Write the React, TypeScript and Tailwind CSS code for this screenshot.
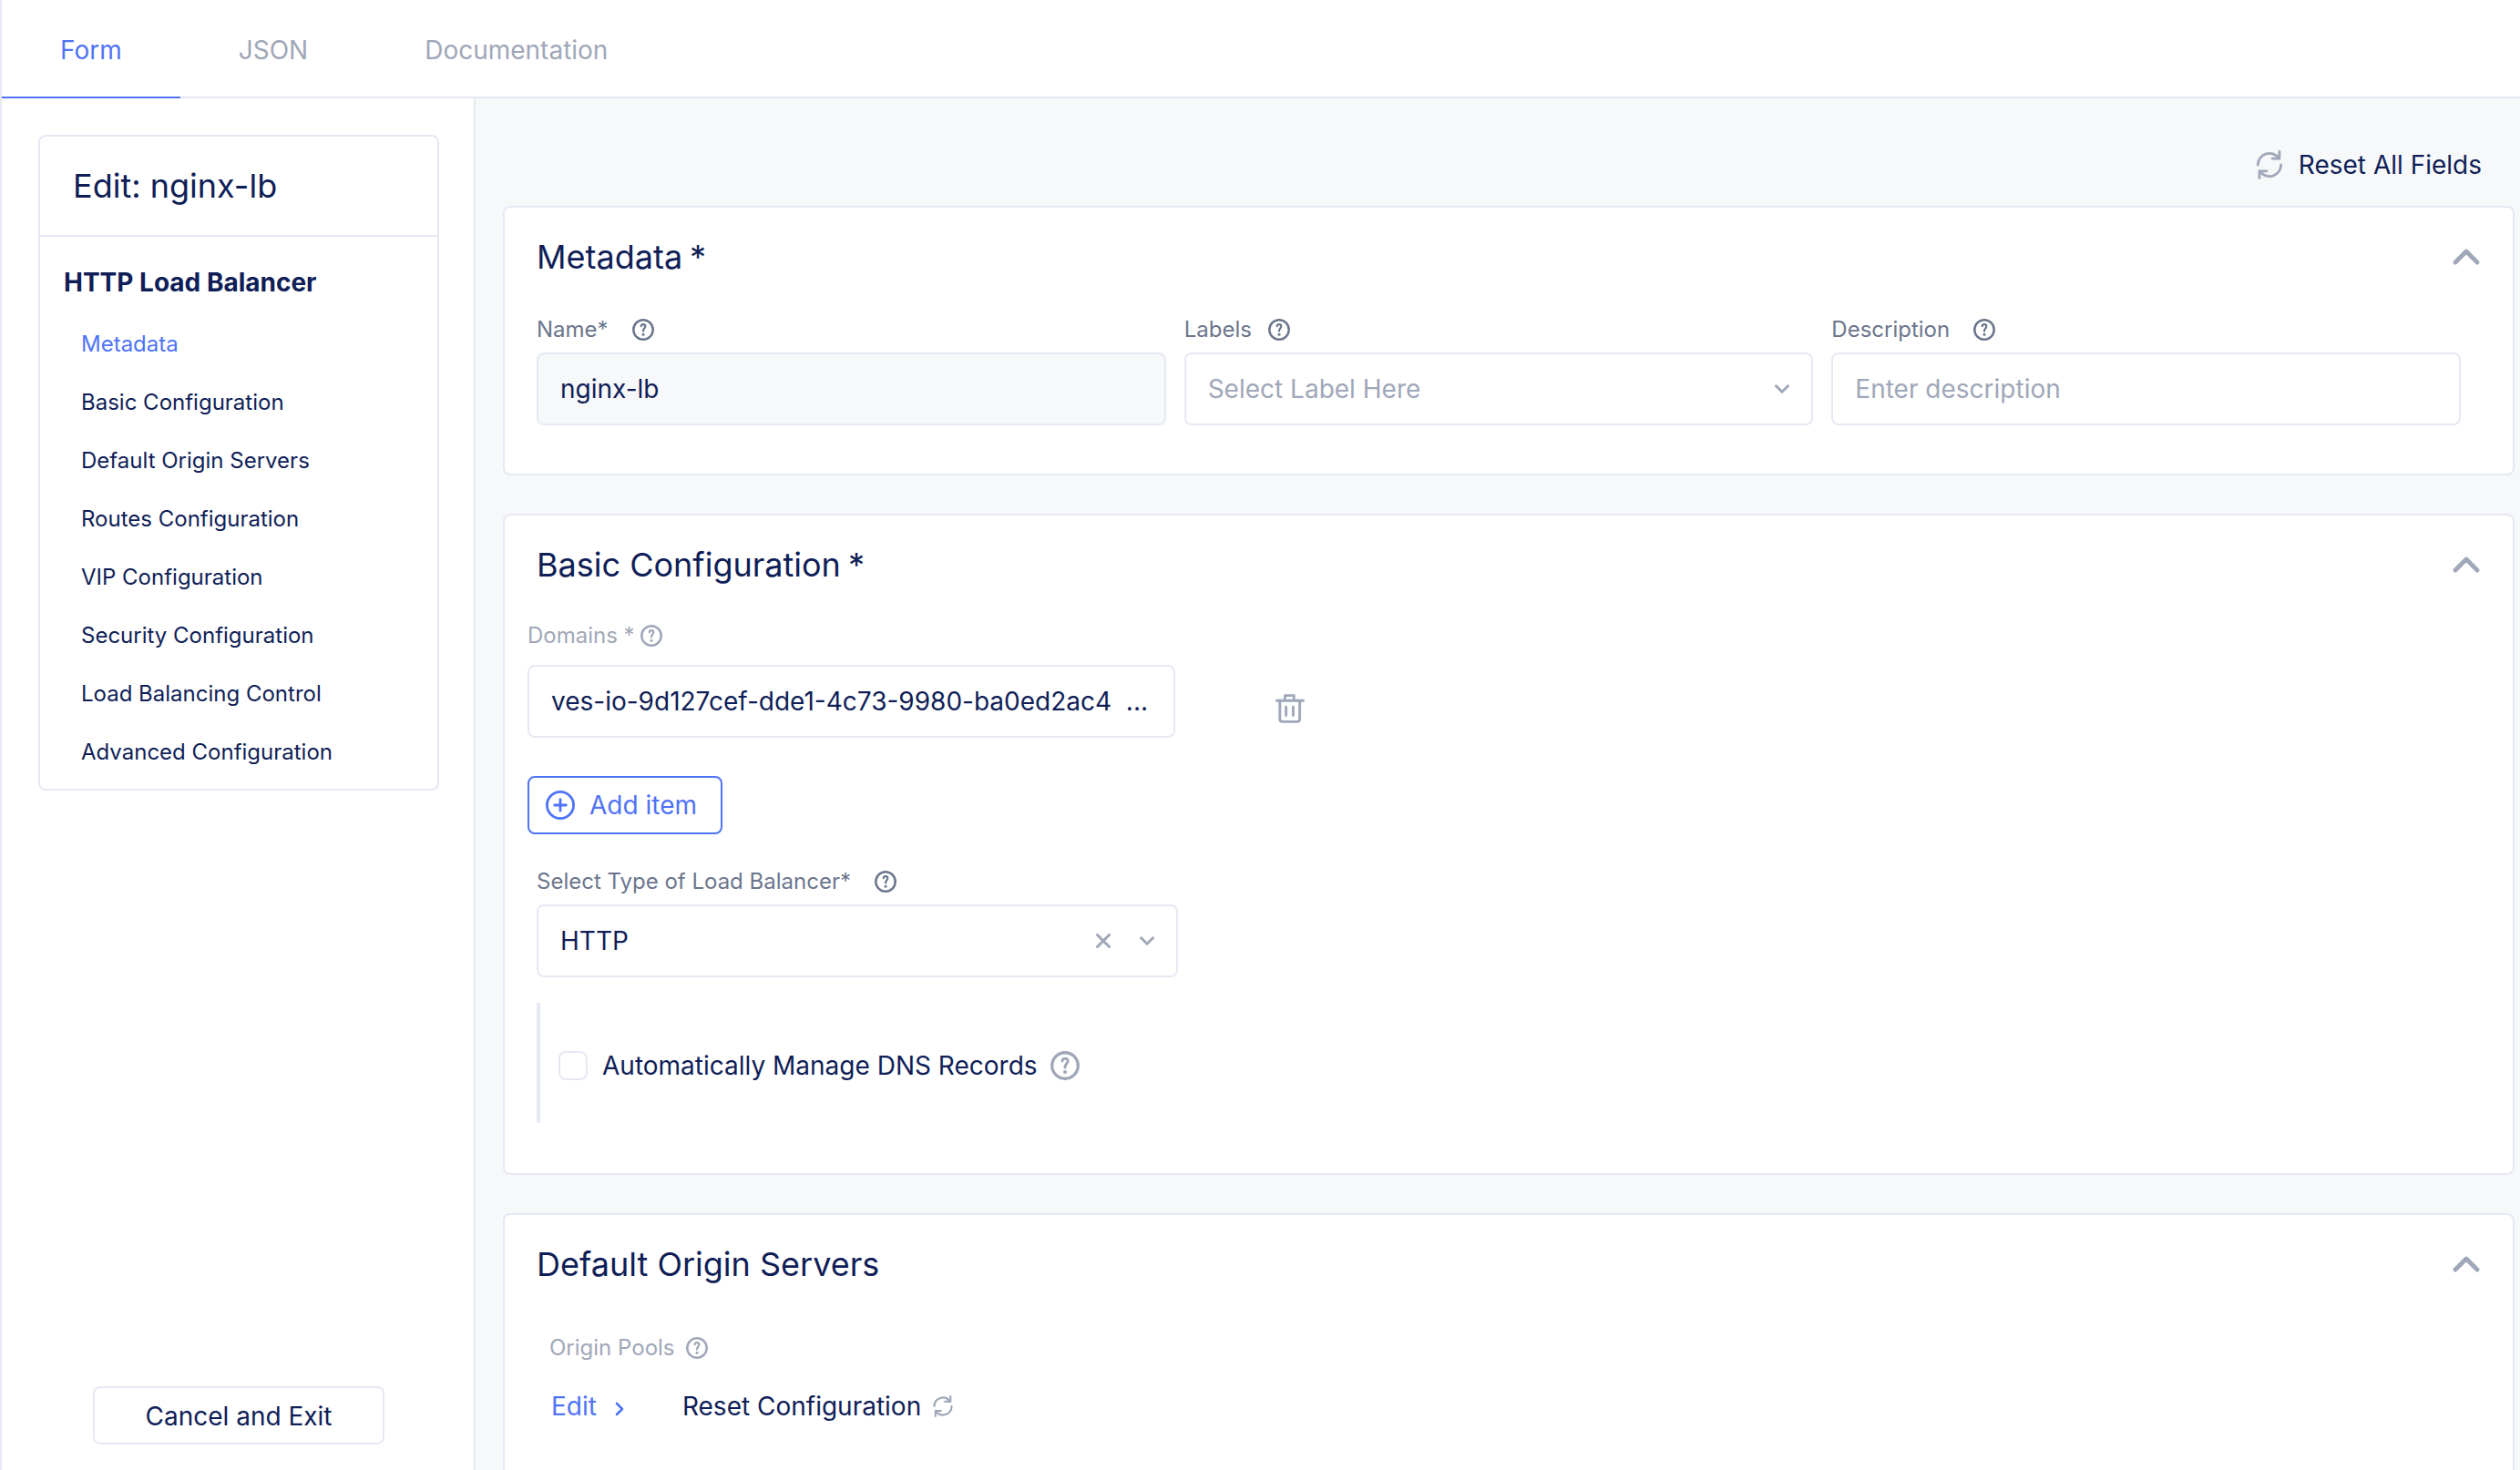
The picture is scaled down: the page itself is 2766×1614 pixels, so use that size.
import React from "react";

type IconProps = { className?: string };

function Help({ className = "" }: IconProps) {
  return (
    <svg viewBox="0 0 24 24" fill="none" stroke="currentColor" strokeLinecap="round" strokeLinejoin="round" className={"shrink-0 " + className} aria-hidden="true">
      <circle cx="12" cy="12" r="10.7" strokeWidth="2.5" />
      <path d="M9.7 8.2C9.800 6.900 10.800 6.200 12 6.200c1.300 0 2.300.8 2.300 2.100 0 1-.5 1.600-1.200 2.400-.7.8-1.100 1.500-1.100 2.900" strokeWidth="2.200" />
      <circle cx="12" cy="17.300" r="1.500" fill="currentColor" stroke="none" />
    </svg>
  );
}

function Refresh({ className = "" }: IconProps) {
  return (
    <svg viewBox="0 0 32 32" fill="none" stroke="currentColor" strokeWidth="2.800" strokeLinecap="round" strokeLinejoin="round" className={"shrink-0 " + className} aria-hidden="true">
      <path d="M3.300 16A12.700 12.700 0 0 1 26.500 8.900" />
      <path d="M27 1.400v7.800h-8" />
      <path d="M28.700 16A12.700 12.700 0 0 1 5.500 23.100" />
      <path d="M5 30.600v-7.800h8" />
    </svg>
  );
}

function ChevronUp() {
  return (
    <svg viewBox="0 0 30 18" fill="none" stroke="currentColor" strokeWidth="4.800" strokeLinecap="round" strokeLinejoin="round" className="h-[18px] w-[30px]" aria-hidden="true">
      <path d="M3 15 15 3l12 12" />
    </svg>
  );
}

function ChevronDown() {
  return (
    <svg viewBox="0 0 16 10" fill="none" stroke="currentColor" strokeWidth="3" strokeLinecap="round" strokeLinejoin="round" className="h-[10px] w-4" aria-hidden="true">
      <path d="m1.500 1.800 6.500 6.400 6.500-6.400" />
    </svg>
  );
}

function Trash() {
  return (
    <svg viewBox="0 0 32 32" fill="none" stroke="currentColor" strokeWidth="2.900" strokeLinecap="round" strokeLinejoin="round" className="size-8" aria-hidden="true">
      <path d="M1.500 7.300h29" />
      <path d="M10.400 7V1.600h9.800V7" />
      <path d="M4.800 7.300v20.200c0 1.700 1.200 2.900 2.900 2.900h16c1.700 0 2.900-1.200 2.900-2.900V7.300" />
      <path d="M11.600 14.200v9.300M19.400 14.200v9.300" />
    </svg>
  );
}

function PlusCircle() {
  return (
    <svg viewBox="0 0 32 32" fill="none" stroke="currentColor" strokeWidth="2.800" strokeLinecap="round" className="size-8" aria-hidden="true">
      <circle cx="16" cy="16" r="14.600" />
      <path d="M16 9.700v12.600M9.700 16h12.600" />
    </svg>
  );
}

const box = "h-20 w-full rounded-lg border-2 border-[#e6e9f3] bg-white px-6 text-[28px] outline-none";

function FieldLabel({ htmlFor, text, gap }: { htmlFor: string; text: string; gap: string }) {
  return (
    <div className={"flex h-[51px] items-center text-2xl text-[#6b768d] " + gap}>
      <label htmlFor={htmlFor}>{text}</label>
      <button type="button" aria-label={"Help for " + text}>
        <Help className="size-6" />
      </button>
    </div>
  );
}

function Card({ title, required, className = "", children }: { title: string; required?: boolean; className?: string; children: React.ReactNode }) {
  return (
    <section className={"rounded-lg border-2 border-[#e6e9f3] bg-white pl-[35px] " + className}>
      <header className="flex h-[108px] items-center justify-between pr-9">
        <h2 className="flex gap-2 text-4xl">
          {title}
          {required && <span>*</span>}
        </h2>
        <button type="button" aria-label={"Collapse " + title} className="text-[#9fa7b8]">
          <ChevronUp />
        </button>
      </header>
      {children}
    </section>
  );
}

const sections = [
  "Metadata",
  "Basic Configuration",
  "Default Origin Servers",
  "Routes Configuration",
  "VIP Configuration",
  "Security Configuration",
  "Load Balancing Control",
  "Advanced Configuration",
];

export default function App() {
  return (
    <div className="flex h-screen flex-col overflow-hidden border-l-2 border-[#e6e9f3] bg-white font-[Inter,sans-serif] text-[28px] text-[#0f1e57]">
      <nav className="flex h-[108px] shrink-0 border-b-2 border-[#e6e9f3] text-[#9fa7b8]">
        <button type="button" className="-mb-0.5 border-b-2 border-[#4f73f7] px-16 pt-1 text-[#4f73f7]">Form</button>
        <button type="button" className="px-16 pt-1">JSON</button>
        <button type="button" className="px-16 pt-1">Documentation</button>
      </nav>

      <div className="flex min-h-0 flex-1">
        <aside className="flex w-[520px] shrink-0 flex-col border-r-2 border-[#e6e9f3] pt-10 pr-[38px] pb-7 pl-10">
          <div className="rounded-lg border-2 border-[#e6e9f3] pb-2">
            <h1 className="flex h-[110px] items-center border-b-2 border-[#e6e9f3] px-9 text-4xl">Edit: nginx-lb</h1>
            <p className="mt-7 px-[26px] leading-[44px] font-bold">HTTP Load Balancer</p>
            <ul className="mt-3.5 text-2xl">
              {sections.map((name, i) => (
                <li key={name}>
                  <a href={"#section-" + i} className={"block pl-[45px] leading-[64px] " + (i === 0 ? "text-[#4f73f7]" : "")}>{name}</a>
                </li>
              ))}
            </ul>
          </div>
          <button type="button" className="mt-auto h-16 w-80 self-center rounded-lg border-2 border-[#e6e9f3] pt-0.5">Cancel and Exit</button>
        </aside>

        <main className="min-w-0 flex-1 overflow-hidden bg-[#f7f8fa] pr-1.5 pl-[30px]">
          <div className="flex h-[118px] items-end justify-end pr-9 pb-7">
            <button type="button" className="flex items-center gap-4 leading-[34px]">
              <Refresh className="size-8 text-[#9fa7b8]" />
              Reset All Fields
            </button>
          </div>

          <Card title="Metadata" required className="pb-[53px]">
            <div className="grid grid-cols-3 gap-5 pr-[57px]">
              <div>
                <FieldLabel htmlFor="name" text="Name*" gap="gap-[26px]" />
                <input id="name" readOnly value="nginx-lb" className="h-20 w-full rounded-lg border-2 border-[#e6e9f3] bg-[#f7f8fa] px-6 text-[28px] outline-none" />
              </div>
              <div>
                <FieldLabel htmlFor="labels" text="Labels" gap="gap-[18px]" />
                <div className="relative">
                  <select id="labels" defaultValue="" className={box + " appearance-none text-[#9fa7b8]"}>
                    <option value="">Select Label Here</option>
                  </select>
                  <span className="pointer-events-none absolute inset-y-0 right-[26px] flex items-center text-[#9fa7b8]">
                    <ChevronDown />
                  </span>
                </div>
              </div>
              <div>
                <FieldLabel htmlFor="description" text="Description" gap="gap-[26px]" />
                <input id="description" placeholder="Enter description" className={box + " placeholder:text-[#9fa7b8]"} />
              </div>
            </div>
          </Card>

          <Card title="Basic Configuration" required className="mt-[42px] pb-[55px]">
            <div className="-ml-2.5">
              <div className="flex h-12 items-center gap-1.5 text-2xl text-[#9fa7b8]">
                <label htmlFor="domain">Domains *</label>
                <button type="button" aria-label="Help for Domains">
                  <Help className="size-6" />
                </button>
              </div>
              <div className="mt-2 flex items-center">
                <div className="w-[711px]">
                  <input id="domain" readOnly value={"ves-io-9d127cef-dde1-4c73-9980-ba0ed2ac4\u00a0\u00a0..."} className={box} />
                </div>
                <button type="button" aria-label="Delete domain" className="mt-4 ml-[110px] text-[#9fa7b8]">
                  <Trash />
                </button>
              </div>
              <button type="button" className="mt-[42px] flex h-16 items-center gap-4 rounded-lg border-2 border-[#4f73f7] pr-[26px] pl-[18px] text-[#4f73f7]">
                <PlusCircle />
                Add item
              </button>
            </div>

            <div className="mt-[26px] w-[704px]">
              <FieldLabel htmlFor="lbtype" text="Select Type of Load Balancer*" gap="gap-[26px]" />
              <div className="relative">
                <select id="lbtype" defaultValue="HTTP" className={box + " appearance-none"}>
                  <option>HTTP</option>
                </select>
                <div className="pointer-events-none absolute inset-y-0 right-[26px] flex items-center gap-8 text-[#9fa7b8]">
                  <button type="button" aria-label="Clear selection" className="pointer-events-auto">
                    <svg viewBox="0 0 16 16" fill="none" stroke="currentColor" strokeWidth="3" strokeLinecap="round" className="size-4" aria-hidden="true">
                      <path d="m1.500 1.500 13 13M14.500 1.500l-13 13" />
                    </svg>
                  </button>
                  <ChevronDown />
                </div>
              </div>
            </div>

            <div className="mt-7 flex h-[132px] items-center border-l-4 border-[#e6e9f3] pt-1.5 pl-5">
              <input id="dns" type="checkbox" className="size-8 appearance-none rounded-lg border-2 border-[#e6e9f3] bg-white checked:bg-[#4f73f7]" />
              <label htmlFor="dns" className="ml-4">Automatically Manage DNS Records</label>
              <button type="button" aria-label="Help for DNS records" className="ml-3.5 text-[#9fa7b8]">
                <Help className="size-8" />
              </button>
            </div>
          </Card>

          <Card title="Default Origin Servers" className="mt-[42px] pb-24">
            <div className="mt-4 flex h-11 items-center gap-3 pl-3.5 text-2xl text-[#9fa7b8]">
              Origin Pools
              <button type="button" aria-label="Help for Origin Pools">
                <Help className="size-6" />
              </button>
            </div>
            <div className="mt-[22px] flex h-10 items-center pl-4">
              <button type="button" className="flex items-center gap-5 text-[#4f73f7]">
                Edit
                <svg viewBox="0 0 10 16" fill="none" stroke="currentColor" strokeWidth="2.600" strokeLinecap="round" strokeLinejoin="round" className="mt-1.5 h-4 w-2.5" aria-hidden="true">
                  <path d="m2 2 6 6-6 6" />
                </svg>
              </button>
              <button type="button" className="ml-16 flex items-center gap-3">
                Reset Configuration
                <Refresh className="size-6 text-[#9fa7b8]" />
              </button>
            </div>
          </Card>
        </main>
      </div>
    </div>
  );
}
